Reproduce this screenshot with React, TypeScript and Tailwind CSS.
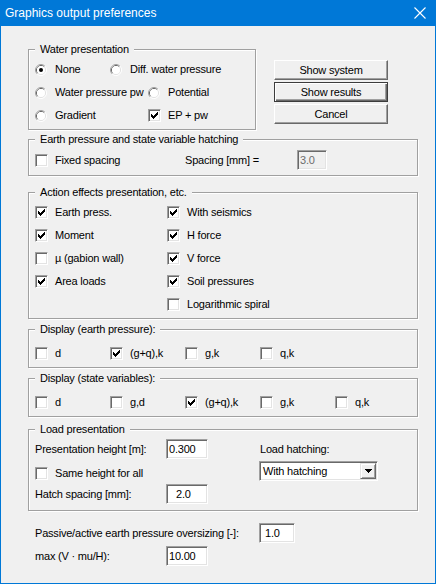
import React from "react";

const CHECK = ["......#", ".....##", "#...###", "##.###.", "#####..", ".###...", "..#...."];

const sunken =
  "border border-t-[#a0a0a0] border-l-[#a0a0a0] border-r-white border-b-white shadow-[inset_1px_1px_0_#696969,inset_-1px_-1px_0_#e3e3e3]";

function Check({ on }: { on?: boolean }) {
  return (
    <span className={`flex h-[13px] w-[13px] shrink-0 items-center justify-center bg-white ${sunken}`}>
      {on && (
        <svg width="7" height="7" viewBox="0 0 7 7" shapeRendering="crispEdges">
          {CHECK.flatMap((row, y) =>
            row.split("").map((c, x) => (c === "#" ? <rect key={`${x}-${y}`} x={x} y={y} width="1" height="1" fill="#000" /> : null))
          )}
        </svg>
      )}
    </span>
  );
}

function Radio({ on }: { on?: boolean }) {
  return (
    <svg width="12" height="12" viewBox="0 0 12 12" className="shrink-0">
      <path d="M2.11 9.89 A5.5 5.5 0 0 1 9.89 2.11" stroke="#a0a0a0" fill="none" />
      <path d="M9.89 2.11 A5.5 5.5 0 0 1 2.11 9.89" stroke="#ffffff" fill="none" />
      <path d="M2.82 9.18 A4.5 4.5 0 0 1 9.18 2.82" stroke="#696969" fill="none" />
      <path d="M9.18 2.82 A4.5 4.5 0 0 1 2.82 9.18" stroke="#e3e3e3" fill="none" />
      <circle cx="6" cy="6" r="4" fill="#fff" />
      {on && <circle cx="6" cy="6" r="2" fill="#000" />}
    </svg>
  );
}

function Opt({ kind, on, label, className = "" }: { kind: "r" | "c"; on?: boolean; label?: string; className?: string }) {
  return (
    <div className={`flex items-center ${className}`}>
      {kind === "r" ? <Radio on={on} /> : <Check on={on} />}
      {label && <span className={kind === "r" ? "ml-[8px] whitespace-nowrap" : "ml-[7px] whitespace-nowrap"}>{label}</span>}
    </div>
  );
}

function Group({ title, className = "", children }: { title: string; className?: string; children?: React.ReactNode }) {
  return (
    <div className={`relative border border-[#a0a0a0] shadow-[inset_1px_1px_0_#fff,1px_1px_0_#fff] ${className}`}>
      <span className="absolute left-[6px] top-[-7px] bg-[#f0f0f0] px-[5px] leading-[13px] whitespace-nowrap">{title}</span>
      {children}
    </div>
  );
}

function Edit({ value, className = "", disabled }: { value: string; className?: string; disabled?: boolean }) {
  return (
    <div
      className={`flex h-[20px] items-center ${sunken} ${disabled ? "bg-[#f0f0f0] text-[#6d6d6d]" : "bg-white"} ${className}`}
    >
      {value}
    </div>
  );
}

function Btn({ label, def }: { label: string; def?: boolean }) {
  const cls = def
    ? "border border-[#3c3c3c] shadow-[inset_1px_1px_0_#fff,inset_-1px_-1px_0_#696969,inset_-2px_-2px_0_#a0a0a0]"
    : "border border-t-white border-l-white border-r-[#696969] border-b-[#696969] shadow-[inset_-1px_-1px_0_#a0a0a0]";
  return <div className={`flex h-[20px] w-[114px] items-center justify-center bg-[#f0f0f0] ${cls}`}>{label}</div>;
}

export default function App() {
  return (
    <div className="flex h-[584px] w-[436px] flex-col bg-[#0078d7] font-['Liberation_Sans',Arial,sans-serif] text-[11px] tracking-[-0.2px] text-black">
      {/* title bar */}
      <div className="flex h-[26px] shrink-0 items-center justify-between pl-[5px] pr-[10px] text-[12px] tracking-normal text-white">
        <span>Graphics output preferences</span>
        <svg width="12" height="12" viewBox="0 0 12 12">
          <path d="M0.5 0.5 L11.5 11.5 M11.5 0.5 L0.5 11.5" stroke="#fff" strokeWidth="1.1" />
        </svg>
      </div>

      <div className="mx-[1px] mb-[1px] flex flex-1 flex-col bg-[#f0f0f0] pl-[27px]">
        {/* water + buttons */}
        <div className="mt-[23px] flex">
          <Group title="Water presentation" className="h-[81px] w-[228px] pl-[6px] pt-[8px]">
            <div className="flex h-[23px] items-center">
              <Opt kind="r" on label="None" className="w-[75px]" />
              <Opt kind="r" label="Diff. water pressure" />
            </div>
            <div className="flex h-[23px] items-center">
              <Opt kind="r" label="Water pressure pw" className="w-[113px]" />
              <Opt kind="r" label="Potential" />
            </div>
            <div className="flex h-[23px] items-center">
              <Opt kind="r" label="Gradient" className="w-[113px]" />
              <Opt kind="c" on label="EP + pw" />
            </div>
          </Group>
          <div className="ml-[18px] mt-[11px] flex flex-col gap-[2px]">
            <Btn label="Show system" />
            <Btn label="Show results" def />
            <Btn label="Cancel" />
          </div>
        </div>

        {/* hatching */}
        <Group title="Earth pressure and state variable hatching" className="mt-[9px] h-[37px] w-[390px] pl-[6px] pt-[10px]">
          <div className="flex h-[20px] items-center">
            <Opt kind="c" label="Fixed spacing" className="w-[150px]" />
            <span className="w-[112px]">Spacing [mm] =</span>
            <Edit value="3.0" disabled className="w-[30px] pl-[2px]" />
          </div>
        </Group>

        {/* action effects */}
        <Group title="Action effects presentation, etc." className="mt-[16px] h-[127px] w-[390px] pl-[6px] pt-[8px]">
          {[
            ["Earth press.", true, "With seismics", true],
            ["Moment", true, "H force", true],
            ["µ (gabion wall)", false, "V force", true],
            ["Area loads", true, "Soil pressures", true],
            ["", false, "Logarithmic spiral", false],
          ].map(([a, aOn, b, bOn], i) => (
            <div key={i} className="flex h-[23px] items-center">
              <div className="w-[132px]">{a && <Opt kind="c" on={aOn as boolean} label={a as string} />}</div>
              <Opt kind="c" on={bOn as boolean} label={b as string} />
            </div>
          ))}
        </Group>

        {/* display earth pressure */}
        <Group title="Display (earth pressure):" className="mt-[10px] h-[39px] w-[390px] pl-[6px] pt-[12px]">
          <div className="flex h-[23px] items-center">
            <Opt kind="c" label="d" className="w-[75px]" />
            <Opt kind="c" on label="(g+q),k" className="w-[75px]" />
            <Opt kind="c" label="g,k" className="w-[75px]" />
            <Opt kind="c" label="q,k" className="w-[75px]" />
          </div>
        </Group>

        {/* display state variables */}
        <Group title="Display (state variables):" className="mt-[10px] h-[39px] w-[390px] pl-[6px] pt-[12px]">
          <div className="flex h-[23px] items-center">
            <Opt kind="c" label="d" className="w-[75px]" />
            <Opt kind="c" label="g,d" className="w-[75px]" />
            <Opt kind="c" on label="(g+q),k" className="w-[75px]" />
            <Opt kind="c" label="g,k" className="w-[75px]" />
            <Opt kind="c" label="q,k" className="w-[75px]" />
          </div>
        </Group>

        {/* load presentation */}
        <Group title="Load presentation" className="mt-[12px] flex h-[82px] w-[390px] pl-[6px] pt-[9px]">
          <div className="flex w-[224px] flex-col">
            <div className="flex h-[20px] items-center">
              <span className="w-[131px]">Presentation height [m]:</span>
              <Edit value="0.300" className="w-[42px] pl-[2px]" />
            </div>
            <div className="mt-[4px] flex h-[20px] items-center">
              <Opt kind="c" label="Same height for all" />
            </div>
            <div className="mt-[1px] flex h-[20px] items-center">
              <span className="w-[131px]">Hatch spacing [mm]:</span>
              <Edit value="2.0" className="w-[42px] pl-[9px]" />
            </div>
          </div>
          <div className="flex flex-col">
            <div className="flex h-[20px] items-center pl-[1px]">Load hatching:</div>
            <div className={`mt-[2px] flex h-[20px] w-[119px] bg-white p-[1px] ${sunken}`}>
              <span className="flex flex-1 items-center pl-[2px]">With hatching</span>
              <span className="flex w-[16px] items-center justify-center border border-t-[#e3e3e3] border-l-[#e3e3e3] border-r-[#696969] border-b-[#696969] bg-[#f0f0f0] shadow-[inset_1px_1px_0_#fff,inset_-1px_-1px_0_#a0a0a0]">
                <svg width="7" height="4" viewBox="0 0 7 4" shapeRendering="crispEdges">
                  <path d="M0 0 H7 L3.5 4 Z" fill="#000" />
                </svg>
              </span>
            </div>
          </div>
        </Group>

        {/* bottom rows */}
        <div className="ml-[7px] mt-[12px] flex h-[20px] items-center">
          <span className="w-[224px]">Passive/active earth pressure oversizing [-]:</span>
          <Edit value="1.0" className="w-[36px] pl-[5px]" />
        </div>
        <div className="ml-[7px] mt-[3px] flex h-[20px] items-center">
          <span className="w-[131px]">max (V · mu/H):</span>
          <Edit value="10.00" className="w-[42px] pl-[2px]" />
        </div>
      </div>
    </div>
  );
}
